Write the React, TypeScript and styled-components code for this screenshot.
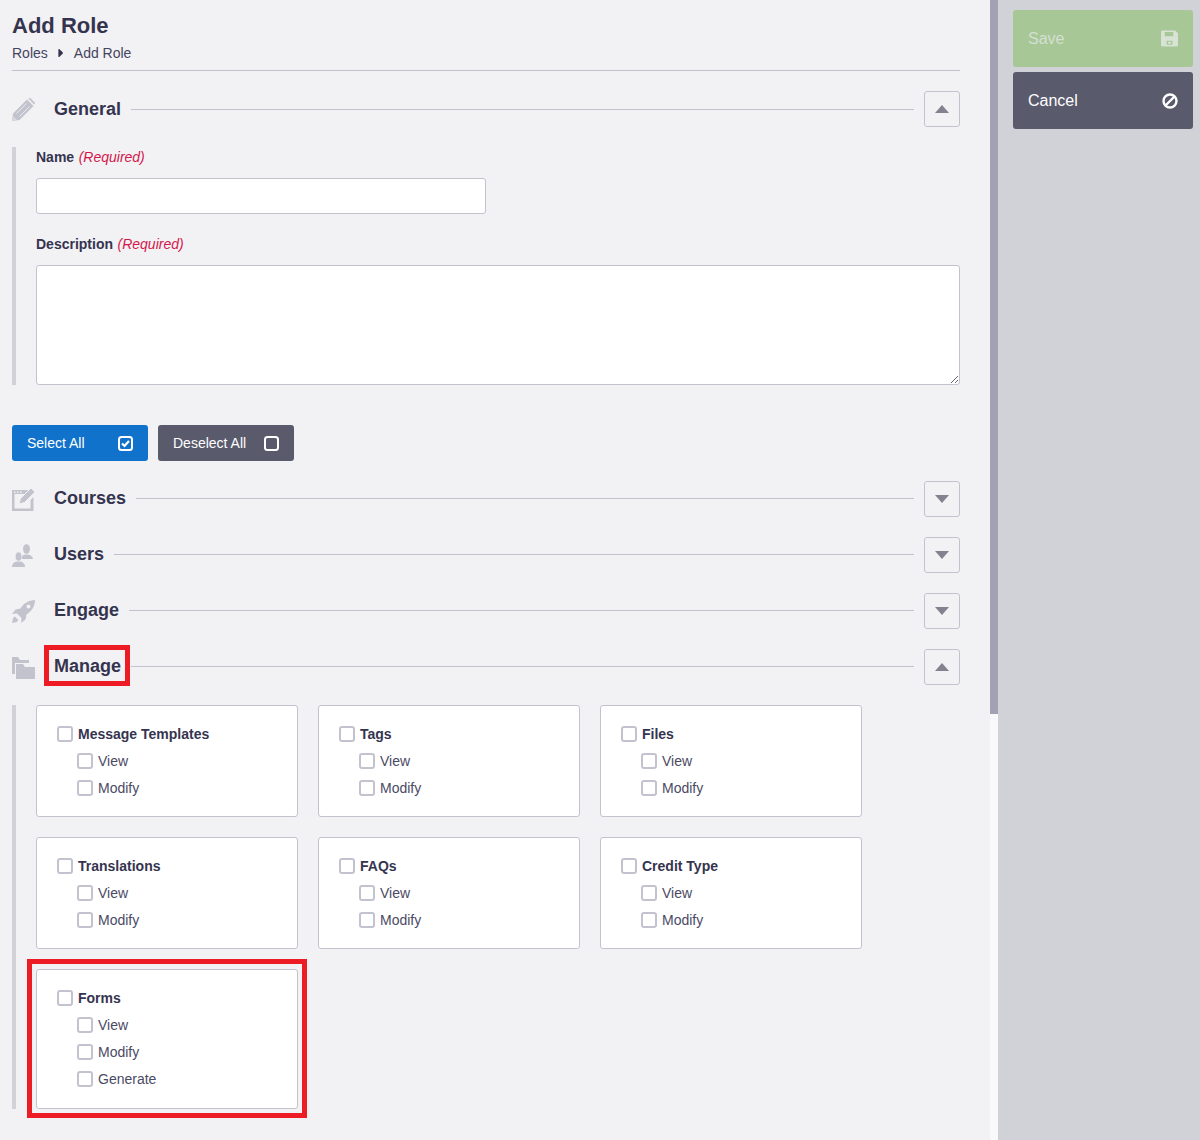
import React from 'react';
import styled, { createGlobalStyle } from 'styled-components';
import { FaCaretRight } from 'react-icons/fa';

const Global = createGlobalStyle`
  html, body { margin: 0; padding: 0; height: 1140px; overflow: hidden; background: #f2f2f5; }
  body { font-family: "Liberation Sans", Arial, sans-serif; color: #35344f; }
  * { box-sizing: border-box; }
`;

const Page = styled.div`
  position: relative;
  display: flex;
  width: 1200px;
  height: 1140px;
  overflow: hidden;
`;
const Main = styled.main`
  width: 990px;
  flex: none;
  padding: 0 30px 0 12px;
  background: #f2f2f5;
`;
const Track = styled.div`
  width: 8px;
  flex: none;
  background: #f9f9fb;
`;
const Thumb = styled.div`
  height: 714px;
  background: #a3a2b4;
`;
const Aside = styled.aside`
  flex: 1;
  background: #d1d2d7;
  padding: 10px 7px 0 15px;
  display: flex;
  flex-direction: column;
  gap: 5px;
`;
const ActionButton = styled.button<{ $save?: boolean }>`
  height: 57px;
  border: 0;
  border-radius: 3px;
  padding: 0 15px;
  display: flex;
  align-items: center;
  justify-content: space-between;
  font: 16px "Liberation Sans", Arial, sans-serif;
  color: ${p => (p.$save ? '#d5dfd2' : '#fff')};
  background: ${p => (p.$save ? '#a7c796' : '#5a5a6d')};
`;
const Title = styled.h1`
  margin: 0;
  padding-top: 13px;
  font-size: 22px;
  line-height: 25px;
  font-weight: 700;
`;
const Crumbs = styled.div`
  display: flex;
  align-items: center;
  gap: 8px;
  height: 33px;
  padding-bottom: 3px;
  border-bottom: 1px solid #c3c2cf;
  font-size: 14px;
  color: #45445e;
  svg { width: 10px; height: 14px; color: #35344f; }
`;
const SectionRow = styled.div`
  display: flex;
  align-items: center;
  height: 36px;
  margin-top: 20px;
`;
const SectionIcon = styled.div`
  width: 42px;
  flex: none;
  display: flex;
  align-items: center;
  color: #c3c3cd;
  svg { width: 23px; height: 23px; display: block; }
`;
const SectionTitle = styled.h2<{ $raised?: boolean }>`
  margin: 0 0 ${p => (p.$raised ? '2px' : '0')};
  font-size: 18px;
  font-weight: 700;
  flex: none;
`;
const Rule = styled.div<{ $raised?: boolean }>`
  flex: 1;
  height: 1px;
  margin: 0 10px ${p => (p.$raised ? '2px' : '0')};
  background: #c3c2cf;
`;
const Toggle = styled.button`
  width: 36px;
  height: 36px;
  flex: none;
  border: 1px solid #c3c2cf;
  border-radius: 3px;
  background: #f2f2f5;
  padding: 0;
  display: flex;
  align-items: center;
  justify-content: center;
`;
const Tri = styled.span<{ $up?: boolean }>`
  width: 0;
  height: 0;
  border-left: 7px solid transparent;
  border-right: 7px solid transparent;
  ${p => (p.$up ? 'border-bottom: 8px solid #83828f;' : 'border-top: 8px solid #83828f;')}
`;
const Panel = styled.div`
  margin-top: 20px;
  border-left: 4px solid #d1d2d7;
  padding-left: 20px;
`;
const Label = styled.label`
  display: block;
  font-size: 14px;
  font-weight: 700;
  line-height: 20px;
  margin-bottom: 11px;
  em { font-weight: 400; color: #d3174a; margin-left: 4.5px; }
`;
const NameInput = styled.input`
  display: block;
  width: 450px;
  height: 36px;
  margin-bottom: 20px;
  border: 1px solid #c3c2cf;
  border-radius: 3px;
  background: #fff;
`;
const DescInput = styled.textarea`
  display: block;
  width: 100%;
  height: 120px;
  border: 1px solid #c3c2cf;
  border-radius: 3px;
  background: #fff;
`;
const BulkBar = styled.div`
  display: flex;
  gap: 10px;
  margin-top: 40px;
`;
const BulkButton = styled.button<{ $primary?: boolean }>`
  width: 136px;
  height: 36px;
  border: 0;
  border-radius: 3px;
  padding: 0 15px;
  display: flex;
  align-items: center;
  justify-content: space-between;
  font: 14px "Liberation Sans", Arial, sans-serif;
  color: #fff;
  background: ${p => (p.$primary ? '#1072cb' : '#5a5a6d')};
`;
const Cards = styled.div`
  display: flex;
  flex-wrap: wrap;
  gap: 20px;
  width: 826px;
`;
const Card = styled.div<{ $tall?: boolean }>`
  width: 262px;
  height: ${p => (p.$tall ? '140px' : '112px')};
  padding: 14px 20px 0;
  border: 1px solid #c3c2cf;
  border-radius: 3px;
  background: #fff;
`;
const Row = styled.div<{ $sub?: boolean }>`
  display: flex;
  align-items: center;
  height: 27px;
  gap: 5px;
  font-size: 14px;
  padding-left: ${p => (p.$sub ? '20px' : '0')};
  font-weight: ${p => (p.$sub ? 400 : 700)};
  color: ${p => (p.$sub ? '#4b4a65' : '#35344f')};
`;
const Check = styled.span`
  width: 16px;
  height: 16px;
  flex: none;
  border: 2px solid #c3c2cf;
  border-radius: 3px;
  background: #fff;
`;
const ManageMark = styled.div`
  position: absolute;
  left: 44px;
  top: 645px;
  width: 86px;
  height: 41px;
  border: 5px solid #ed1c24;
`;
const FormsMark = styled.div`
  position: absolute;
  left: 27px;
  top: 959px;
  width: 280px;
  height: 159px;
  border: 5px solid #ed1c24;
`;

const BG = '#f2f2f5';

const PencilIcon = () => (
  <svg viewBox="0 0 23 23" fill="currentColor">
    <path d="M0 23l1-7.500L15 1.500 21.500 8 7.500 22z" />
    <path d="M16.500 .8l.5-.5c.5-.4 1-.4 1.500 0l4.200 4.200c.4.5.4 1 0 1.500l-.5.5z" />
    <path d="M4.500 15.500L14.500 5.500M7.500 18.500L17.500 8.500" stroke={BG} strokeWidth=".8" fill="none" />
    <path d="M0 23l1-5 4 4z" fill="#d8d8df" />
  </svg>
);
const CoursesIcon = () => (
  <svg viewBox="0 0 23 23" fill="currentColor">
    <path d="M0 2h16l-2 4H2.500v14.500h16V12l3-3v14H0z" />
    <path d="M2 3.500h1.500V5H2zM5 3.500h1.500V5H5zM8 3.500h1.500V5H8z" fill={BG} />
    <path d="M19 0l4 4-10.500 10.500-5.500 1.500 1.500-5.500z" stroke={BG} strokeWidth="1" />
  </svg>
);
const UsersIcon = () => (
  <svg viewBox="0 0 23 23" fill="currentColor">
    <ellipse cx="14.500" cy="5" rx="3.500" ry="4.800" />
    <path d="M9 15c0-3 2.500-4 4-4.500h3c1.500.5 5 1.500 5 4.500z" />
    <ellipse cx="6.500" cy="12.500" rx="3.200" ry="4.500" stroke={BG} strokeWidth=".6" />
    <path d="M0 23c0-3.500 2.500-5 4.500-5.500h4c2 .5 4.500 2 4.500 5.500z" />
  </svg>
);
const RocketIcon = () => (
  <svg viewBox="0 0 23 23" fill="currentColor">
    <path fillRule="evenodd" d="M23 0C17 0 11.500 3.500 8.500 8.500L3.500 9.500 0 14l5-.5 4.500 4.500-.5 5 4.500-3.500 1-5C19.500 11.500 23 6 23 0zM16.500 4.500a2 2 0 1 1 0 4 2 2 0 0 1 0-4z" />
    <path d="M0 23l1-5 1.800-1.500 3.500 3.500-1.500 2z" />
  </svg>
);
const FoldersIcon = () => (
  <svg viewBox="0 0 23 23" fill="currentColor">
    <path d="M0 1h6l2 3h9v3H3v11H0z" />
    <path d="M4 8h7l2 3h10v12H4z" />
  </svg>
);
const CheckedIcon = () => (
  <svg width="15" height="15" viewBox="0 0 15 15" fill="none" stroke="#fff">
    <rect x="1" y="1" width="13" height="13" rx="2.500" strokeWidth="2" />
    <path d="M4 7.500l2.500 2.500L11 5" strokeWidth="2.200" />
  </svg>
);
const EmptyIcon = () => (
  <svg width="15" height="15" viewBox="0 0 15 15" fill="none" stroke="#fff">
    <rect x="1" y="1" width="13" height="13" rx="2.500" strokeWidth="2" />
  </svg>
);
const FloppyIcon = () => (
  <svg width="17" height="17" viewBox="0 0 18 17" fill="#d9e3d5">
    <path fillRule="evenodd" d="M1.500 0H15l3 3v12.500c0 .8-.7 1.500-1.500 1.500h-15C.7 17 0 16.300 0 15.500v-14C0 .7.700 0 1.500 0zM4 1.500V6h9V1.500zM6 11v4h6v-4zM7.500 12h3v2h-3z" />
  </svg>
);
const BlockedIcon = () => (
  <svg width="16" height="16" viewBox="0 0 16 16" fill="none" stroke="#fff" strokeWidth="2.400">
    <circle cx="8" cy="8" r="6.500" />
    <path d="M3.500 12.500l9-9" />
  </svg>
);

const Section = ({ icon, title, up, raised }: { icon: React.ReactNode; title: string; up?: boolean; raised?: boolean }) => (
  <SectionRow>
    <SectionIcon>{icon}</SectionIcon>
    <SectionTitle $raised={raised}>{title}</SectionTitle>
    <Rule $raised={raised} />
    <Toggle><Tri $up={up} /></Toggle>
  </SectionRow>
);

const cards = [
  ['Message Templates', ['View', 'Modify']],
  ['Tags', ['View', 'Modify']],
  ['Files', ['View', 'Modify']],
  ['Translations', ['View', 'Modify']],
  ['FAQs', ['View', 'Modify']],
  ['Credit Type', ['View', 'Modify']],
  ['Forms', ['View', 'Modify', 'Generate']],
] as [string, string[]][];

export default function App() {
  return (
    <Page>
      <Global />
      <Main>
        <Title>Add Role</Title>
        <Crumbs>Roles <FaCaretRight /> Add Role</Crumbs>
        <Section icon={<PencilIcon />} title="General" up />
        <Panel>
          <Label>Name<em>(Required)</em></Label>
          <NameInput />
          <Label>Description<em>(Required)</em></Label>
          <DescInput />
        </Panel>
        <BulkBar>
          <BulkButton $primary>Select All <CheckedIcon /></BulkButton>
          <BulkButton>Deselect All <EmptyIcon /></BulkButton>
        </BulkBar>
        <Section icon={<CoursesIcon />} title="Courses" raised />
        <Section icon={<UsersIcon />} title="Users" raised />
        <Section icon={<RocketIcon />} title="Engage" raised />
        <Section icon={<FoldersIcon />} title="Manage" up raised />
        <Panel>
          <Cards>
            {cards.map(([name, subs]) => (
              <Card key={name} $tall={subs.length > 2}>
                <Row><Check />{name}</Row>
                {subs.map(s => <Row $sub key={s}><Check />{s}</Row>)}
              </Card>
            ))}
          </Cards>
        </Panel>
      </Main>
      <Track><Thumb /></Track>
      <Aside>
        <ActionButton $save>Save <FloppyIcon /></ActionButton>
        <ActionButton>Cancel <BlockedIcon /></ActionButton>
      </Aside>
      <ManageMark />
      <FormsMark />
    </Page>
  );
}
